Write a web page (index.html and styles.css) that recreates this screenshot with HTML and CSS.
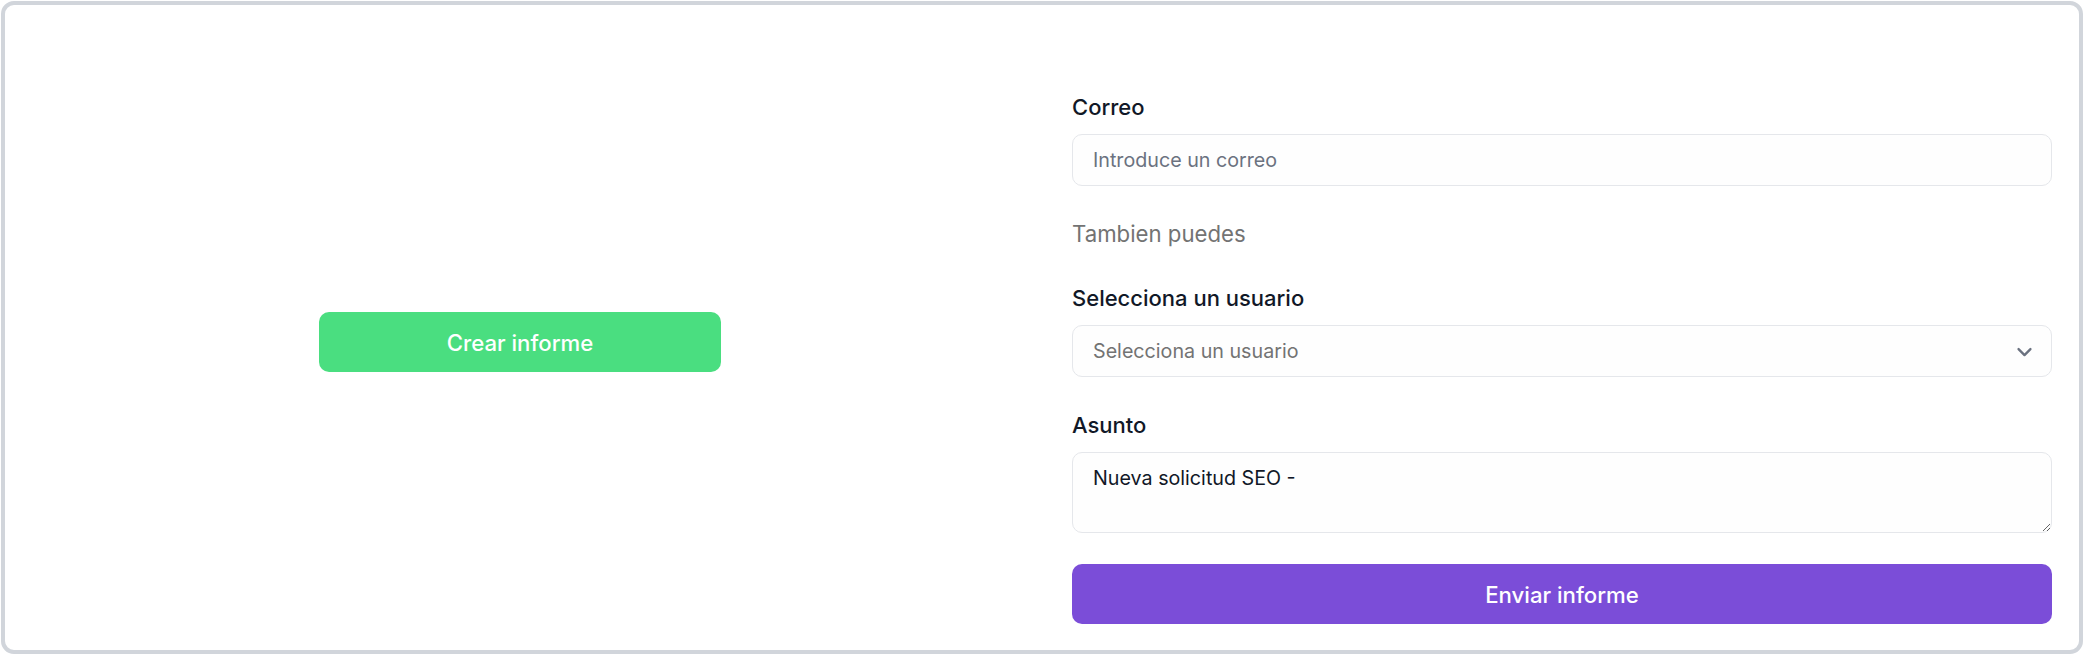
FILE: index.html
```html
<!DOCTYPE html>
<html lang="es">
<head>
<meta charset="utf-8">
<title>Informe</title>
<link rel="stylesheet" href="styles.css">
</head>
<body>
<div class="card">
  <div class="left">
    <button class="btn btn-green" type="button">Crear informe</button>
  </div>
  <form class="form">
    <label class="label">Correo</label>
    <input class="field" type="email" placeholder="Introduce un correo">
    <p class="hint">Tambien puedes</p>
    <label class="label label-gap">Selecciona un usuario</label>
    <div class="field select">
      <span class="select-text">Selecciona un usuario</span>
      <svg class="chevron" width="16" height="16" viewBox="0 0 16 16" fill="none"><path d="M3 6l5 5 5-5" stroke="#6b7280" stroke-width="2" stroke-linecap="round" stroke-linejoin="round"/></svg>
    </div>
    <label class="label label-gap">Asunto</label>
    <textarea class="field area">Nueva solicitud SEO - </textarea>
    <button class="btn btn-purple" type="button">Enviar informe</button>
  </form>
</div>
</body>
</html>
```
FILE: styles.css
```css
* { box-sizing: border-box; }
html, body { margin: 0; padding: 0; background: #ffffff; }
body {
  font-family: Inter, "Noto Sans", "Liberation Sans", sans-serif;
  padding: 1px;
}
.card {
  height: 653px;
  border: 4px solid #d1d5db;
  border-radius: 13px;
  background: #ffffff;
  padding: 55px 27px 26px 27px;
  display: grid;
  grid-template-columns: 1fr 1fr;
  column-gap: 60px;
}
.left {
  display: flex;
  align-items: center;
  justify-content: center;
}
.btn {
  font-family: inherit;
  font-size: 22.2px;
  font-weight: 500;
  color: #ffffff;
  border: none;
  border-radius: 10px;
  height: 60px;
  cursor: pointer;
}
.btn-green {
  background: #4ade80;
  width: 402px;
  margin-right: 4px;
}
.btn-purple {
  background: #7b4dd8;
  width: 100%;
  margin-top: 31px;
}
.form {
  display: flex;
  flex-direction: column;
  padding-top: 31px;
  margin: 0;
}
.label {
  display: block;
  font-size: 22px;
  line-height: 32px;
  font-weight: 500;
  color: #111827;
  margin-bottom: 11px;
}
.label-gap { margin-top: 32px; }
.field {
  font-family: inherit;
  border: 1px solid #e5e7eb;
  border-radius: 10px;
  background: #fefefe;
  width: 100%;
  height: 52px;
  padding: 0 20px;
  font-size: 19.7px;
  color: #111827;
  outline: none;
}
.field::placeholder { color: #6b7280; }
.hint {
  margin: 32px 0 0 0;
  font-size: 22.2px;
  line-height: 32px;
  color: #737373;
}
.select {
  display: flex;
  align-items: center;
  justify-content: space-between;
  padding-right: 17px;
}
.select-text { color: #737373; }
.chevron { width: 19px; height: 19px; }
.area {
  height: 81px;
  padding: 12px 20px;
  font-size: 19.7px;
  line-height: 26.67px;
  resize: vertical;
  display: block;
}
```
